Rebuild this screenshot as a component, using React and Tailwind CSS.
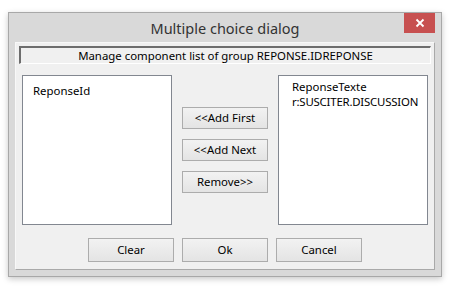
export default function App() {
  const font = { fontFamily: '"Segoe UI", "Noto Sans", "Open Sans", sans-serif' };
  const btn =
    "flex items-center justify-center border border-[#acacac] bg-gradient-to-b from-[#f2f2f2] to-[#e4e4e4] text-[11.4px] text-black leading-none";
  return (
    <div className="w-[451px] h-[291px] bg-white overflow-hidden" style={font}>
      <div className="ml-[8px] mt-[12px] w-[434px] h-[265px] bg-[#d9d9d9] border border-[#a8a8a8] shadow-[0_2px_6px_rgba(0,0,0,0.22)] flex flex-col">
        <div className="relative h-[29px] flex items-center justify-center">
          <span className="text-[14.5px] text-[#333333] leading-none mt-[1px]">Multiple choice dialog</span>
          <div className="absolute right-[6px] top-0 w-[31px] h-[20px] bg-[#c75050] flex items-center justify-center">
            <svg width="10" height="10" viewBox="0 0 10 10">
              <path d="M1.5 1.5 L8.5 8.5 M8.5 1.5 L1.5 8.5" stroke="white" strokeWidth="1.8" />
            </svg>
          </div>
        </div>
        <div className="mx-[6px] mb-[6px] flex-1 bg-[#f0f0f0] border border-t-[#f8f8f8] border-l-[#f8f8f8] border-r-[#a9a9a9] border-b-[#a9a9a9] flex flex-col">
          <div className="mx-[3px] mt-[3px] h-[18px] border-t-2 border-l-2 border-t-[#6d6d6d] border-l-[#6d6d6d] border-r border-b border-r-white border-b-white bg-[#f0f0f0] flex items-center justify-center">
            <span className="text-[11.4px] text-black leading-none">Manage component list of group REPONSE.IDREPONSE</span>
          </div>
          <div className="flex ml-[6px] mt-[11px]">
            <div className="w-[150px] h-[150px] bg-white border border-[#828790] pl-[10px] pt-[7px]">
              <div className="text-[11.4px] leading-[15px] text-black">ReponseId</div>
            </div>
            <div className="ml-[10px] w-[86px] pt-[32px] flex flex-col gap-[10px]">
              <div className={`${btn} h-[22px]`}>&lt;&lt;Add First</div>
              <div className={`${btn} h-[22px]`}>&lt;&lt;Add Next</div>
              <div className={`${btn} h-[22px]`}>Remove&gt;&gt;</div>
            </div>
            <div className="ml-[10px] w-[150px] h-[150px] bg-white border border-[#828790] pl-[13px] pt-[3px]">
              <div className="text-[11.4px] leading-[15px] text-black">ReponseTexte</div>
              <div className="text-[11.4px] leading-[15px] text-black tracking-[-0.2px]">r:SUSCITER.DISCUSSION</div>
            </div>
          </div>
          <div className="flex justify-center gap-[8px] mt-[13px]">
            <div className={`${btn} w-[86px] h-[24px]`}>Clear</div>
            <div className={`${btn} w-[86px] h-[24px]`}>Ok</div>
            <div className={`${btn} w-[86px] h-[24px]`}>Cancel</div>
          </div>
        </div>
      </div>
    </div>
  );
}
